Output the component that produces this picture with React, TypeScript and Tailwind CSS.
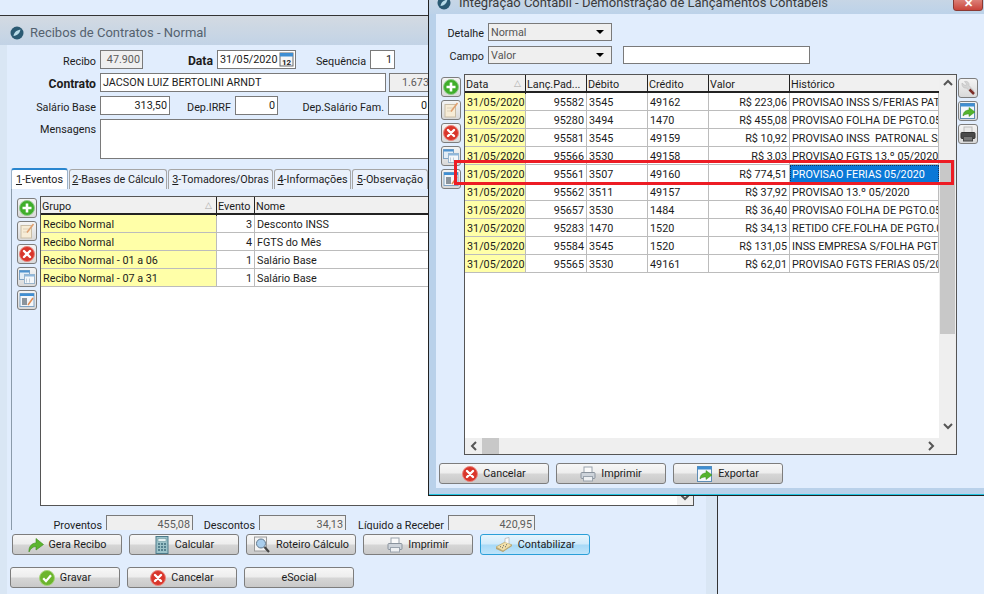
import type { ReactNode } from "react"

const IconAdd = () => (
  <svg width="16" height="16" viewBox="0 0 16 16">
    <circle cx="8" cy="8" r="7.5" fill="#3fae2a" stroke="#8fc98a" />
    <path d="M8 3.5v9M3.5 8h9" stroke="#fff" strokeWidth="2.6" />
  </svg>
)

const IconCancel = ({ size = 16 }: { size?: number }) => (
  <svg width={size} height={size} viewBox="0 0 16 16">
    <circle cx="8" cy="8" r="7.5" fill="#d9362b" stroke="#e9857d" />
    <path d="M5 5l6 6M11 5l-6 6" stroke="#fff" strokeWidth="2.4" strokeLinecap="round" />
  </svg>
)

const IconCheck = () => (
  <svg width="16" height="16" viewBox="0 0 16 16">
    <circle cx="8" cy="8" r="7.5" fill="#6cb52d" stroke="#a5d37a" />
    <path d="M4.2 8.2l2.8 3 5-6" stroke="#fff" strokeWidth="2.2" fill="none" />
  </svg>
)

const IconEdit = () => (
  <svg width="16" height="16" viewBox="0 0 16 16">
    <rect x="2" y="2.5" width="10.5" height="12.5" fill="#f7ecd6" stroke="#c9bda6" />
    <path d="M4 6h6M4 9h5" stroke="#ddd0b8" />
    <path d="M14.5 1L8 9.5" stroke="#e0a070" strokeWidth="1.6" />
  </svg>
)

const IconWindows = () => (
  <svg width="16" height="16" viewBox="0 0 16 16">
    <rect x="0.5" y="1.5" width="10" height="9" fill="#e3edf6" stroke="#7fa3c4" />
    <rect x="0.5" y="1.5" width="10" height="2" fill="#4f93cf" />
    <rect x="5.5" y="5.5" width="10" height="9" fill="#f4f7fa" stroke="#9ab4cb" />
    <rect x="5.5" y="5.5" width="10" height="2" fill="#8fb8dc" />
    <path d="M7.5 9.5v4M10.5 9.5v4" stroke="#c0cdd8" />
  </svg>
)

const IconWindowEdit = () => (
  <svg width="16" height="16" viewBox="0 0 16 16">
    <rect x="1" y="1.5" width="14" height="13" fill="#f3f6f9" stroke="#7fa3c4" />
    <rect x="1" y="1.5" width="14" height="2.5" fill="#3f8ed2" />
    <rect x="3" y="6" width="5" height="7" fill="#8b949c" />
    <path d="M14 6l-5 7" stroke="#e08a50" strokeWidth="1.5" />
  </svg>
)

const IconWrench = () => (
  <svg width="16" height="16" viewBox="0 0 16 16">
    <path d="M2 3l3 2.5 2-1L4.500 1.500C7 .8 9.500 2.500 9 5.500L14 11l-2 2.500-5.500-5.500C3.500 8.500 1.500 6 2 3z" fill="#d4d4d4" stroke="#b5b5b5" strokeWidth=".5" />
    <path d="M9.500 9.500l4.500 4.500" stroke="#7d2f28" strokeWidth="2.500" />
  </svg>
)

const IconExport = () => (
  <svg width="16" height="16" viewBox="0 0 16 16">
    <rect x="0.5" y="0.500" width="14" height="15" fill="#f3f7fb" stroke="#5f8db5" />
    <rect x="0.5" y="0.500" width="14" height="3" fill="#3f8ed2" />
    <path d="M3 13c0-4 3-6 6-6V4.500l6 4.500-6 4.500V11c-2.500 0-4.500.5-6 2z" fill="#52b32c" stroke="#3c8a1e" strokeWidth=".5" />
  </svg>
)

const IconPrinter = ({ dark = false }: { dark?: boolean }) => (
  <svg width="16" height="16" viewBox="0 0 16 16">
    <rect x="4" y="1" width="8" height="6" fill={dark ? "#e8e8e8" : "#fafafa"} stroke={dark ? "#bbb" : "#9aa3ad"} />
    <rect x="1" y="6.500" width="14" height="6" rx="1" fill={dark ? "#4a4a4a" : "#cdd3da"} stroke={dark ? "#333" : "#8a939d"} />
    <rect x="3.500" y="10.500" width="9" height="4.500" fill={dark ? "#777" : "#eef0f2"} stroke={dark ? "#444" : "#9aa3ad"} />
  </svg>
)

const IconArrow = () => (
  <svg width="16" height="16" viewBox="0 0 16 16">
    <path d="M1 15c-.5-5 2.500-9 7-9V1.500L15.500 7.500 8 13V9.500C5 9.500 2.500 11.500 1 15z" fill="#5cb52f" stroke="#3d8a1c" strokeWidth=".6" />
  </svg>
)

const IconCalculator = () => (
  <svg width="16" height="18" viewBox="0 0 16 18">
    <rect x="2" y="0.500" width="12" height="17" fill="#9cc3c9" stroke="#4c7a8a" />
    <rect x="4" y="2.500" width="8" height="3" fill="#e6f2f2" stroke="#5e8b96" strokeWidth=".5" />
    <path d="M4 8h2M7 8h2M10 8h2M4 11h2M7 11h2M10 11h2M4 14h2M7 14h2M10 14h2" stroke="#3f6d7c" strokeWidth="1.500" />
  </svg>
)

const IconSearchDoc = () => (
  <svg width="18" height="18" viewBox="0 0 18 18">
    <rect x="1.500" y="1" width="12" height="14" fill="#f3f3f3" stroke="#9a9a9a" />
    <circle cx="8" cy="7.500" r="4.500" fill="#a9cdec" stroke="#62788c" />
    <path d="M11.500 11l4.500 5" stroke="#444" strokeWidth="2.200" />
  </svg>
)

const IconAdding = () => (
  <svg width="18" height="16" viewBox="0 0 18 16">
    <path d="M1 10l9-5 7 3-9 6z" fill="#f1dfa8" stroke="#b49c5c" strokeWidth=".6" />
    <path d="M1 10v2l7 3 9-6V8l-9 6z" fill="#b8a470" />
    <path d="M10 5V1.500l4-1v6" fill="#fafafa" stroke="#aaa" strokeWidth=".6" />
    <path d="M5 10l1-.6M7 11l1-.6M8 9l1-.6M10 10l1-.6M11 8l1-.6" stroke="#6b6b6b" />
  </svg>
)

const IconCalendar = () => (
  <svg width="15" height="15" viewBox="0 0 15 15">
    <rect x="1" y="1" width="13" height="13" fill="#f6f6f6" stroke="#6b6b6b" />
    <rect x="1" y="1" width="13" height="3.500" fill="#3f8ed2" />
    <text x="7.500" y="12.500" textAnchor="middle" fontSize="8" fontWeight="700" fill="#222">12</text>
  </svg>
)

const IconLogo = () => (
  <svg width="14" height="14" viewBox="0 0 14 14">
    <circle cx="7" cy="7" r="6.500" fill="#2b5a73" />
    <path d="M3.500 10c.5-3.500 2.500-5.500 7-6.500-1 4-3 6-7 6.500z" fill="#b8dbe8" />
  </svg>
)

const Field = ({ w, h = 19, value = "", right, gray }: { w: number; h?: number; value?: string; right?: boolean; gray?: boolean }) => (
  <div
    style={{ width: w, height: h }}
    className={`shrink-0 border border-[#7a7a7a] px-[2px] leading-[18px] whitespace-nowrap overflow-hidden ${right ? "text-right" : ""} ${gray ? "bg-[#efefef] text-[#5c5c5c]" : "bg-white"}`}
  >
    {value}
  </div>
)

const Label = ({ w, bold, children }: { w: number; bold?: boolean; children: ReactNode }) => (
  <div style={{ width: w }} className={`shrink-0 text-right whitespace-nowrap h-[18px] leading-[21px] ${bold ? "font-bold text-[12.2px]" : ""}`}>
    {children}
  </div>
)

const Btn = ({ w = 110, icon, label, active }: { w?: number; icon?: ReactNode; label: string; active?: boolean }) => (
  <div
    style={{ width: w }}
    className={`shrink-0 h-[21px] flex items-center justify-center gap-[5px] rounded-[3px] border ${active ? "border-[#2a9fd8] bg-[linear-gradient(#e6f5fd,#cfeafb_48%,#a6d9f7_52%,#bfe4fa)]" : "border-[#7d7d7d] bg-[linear-gradient(#f7f7f7,#ededed_48%,#d6d6d6_52%,#c9c9c9)]"}`}
  >
    {icon}
    <span className="pt-[2px]">{label}</span>
  </div>
)

const ToolBtn = ({ children }: { children: ReactNode }) => (
  <div className="w-[20px] h-[20px] flex items-center justify-center rounded-[3px] border border-[#7d7d7d] bg-[linear-gradient(#f4f4f4,#d9d9d9)]">
    {children}
  </div>
)

const Chevron = ({ dir }: { dir: "up" | "down" | "left" | "right" }) => {
  const d = {
    up: "M1 6l4-4 4 4",
    down: "M1 3l4 4 4-4",
    left: "M7 1L3 5l4 4",
    right: "M3 1l4 4-4 4",
  }[dir]
  return (
    <svg width="10" height="10" viewBox="0 0 10 10">
      <path d={d} fill="none" stroke="#555" strokeWidth="2" />
    </svg>
  )
}

const Tab = ({ n, label, w, active }: { n: string; label: string; w: number; active?: boolean }) => (
  <div
    style={{ width: w }}
    className={`shrink-0 rounded-t-[3px] border border-b-0 text-center leading-[20px] whitespace-nowrap ${active ? "h-[21px] border-[#9db3c9] border-t-2 border-t-[#2a86cf] bg-white z-10" : "h-[20px] border-[#a6a6a6] bg-[#eaf1fb]"}`}
  >
    <span className="underline">{n}</span>-{label}
  </div>
)

const eventos = [
  ["Recibo Normal", "3", "Desconto INSS"],
  ["Recibo Normal", "4", "FGTS do Mês"],
  ["Recibo Normal - 01 a 06", "1", "Salário Base"],
  ["Recibo Normal - 07 a 31", "1", "Salário Base"],
]

const lancamentos = [
  ["95582", "3545", "49162", "R$ 223,06", "PROVISAO INSS S/FERIAS PATRONAL 05/2020"],
  ["95280", "3494", "1470", "R$ 455,08", "PROVISAO FOLHA DE PGTO.05/2020"],
  ["95581", "3545", "49159", "R$ 10,92", "PROVISAO INSS  PATRONAL S/FOLHA 05/2020"],
  ["95566", "3530", "49158", "R$ 3,03", "PROVISAO FGTS 13.º 05/2020"],
  ["95561", "3507", "49160", "R$ 774,51", "PROVISAO FERIAS 05/2020"],
  ["95562", "3511", "49157", "R$ 37,92", "PROVISAO 13.º 05/2020"],
  ["95657", "3530", "1484", "R$ 36,40", "PROVISAO FOLHA DE PGTO.05/2020"],
  ["95283", "1470", "1520", "R$ 34,13", "RETIDO CFE.FOLHA DE PGTO.05/2020"],
  ["95584", "3545", "1520", "R$ 131,05", "INSS EMPRESA S/FOLHA PGTO 05/2020"],
  ["95565", "3530", "49161", "R$ 62,01", "PROVISAO FGTS FERIAS 05/2020"],
]

const headCell = "border-r border-[#222] px-[1px] leading-[19px] whitespace-nowrap overflow-hidden"
const cell = "h-[18px] border-r border-b border-[#bcbcbc] px-[2px] leading-[20px] whitespace-pre overflow-hidden"

function MainWindow() {
  return (
    <div className="absolute left-0 top-[15px] w-[718px] h-[579px] border-t border-r border-[#333] bg-[#d9e6f4] flex flex-col">
      <div className="h-[29px] shrink-0 flex items-center gap-[6px] pl-[10px] pt-[4px] bg-[linear-gradient(#d3dae2,#c2d3e6)]">
        <IconLogo />
        <span className="text-[13px] text-[#55626f]">Recibos de Contratos - Normal</span>
      </div>
      <div className="ml-[7px] mr-[11px] flex-1 bg-[#e1edfd] flex flex-col">
        <div className="pt-[5px] flex flex-col gap-[4px]">
          <div className="flex items-center">
            <Label w={89}>Recibo</Label>
            <div className="w-[4px]" />
            <Field w={43} value="47.900" gray right />
            <Label w={70} bold>Data</Label>
            <div className="w-[4px]" />
            <div className="relative w-[79px] h-[19px] shrink-0 border border-[#7a7a7a] bg-white pl-[2px] leading-[18px]">
              31/05/2020
              <span className="absolute right-[1px] top-[1px]">
                <IconCalendar />
              </span>
            </div>
            <Label w={70}>Sequência</Label>
            <div className="w-[4px]" />
            <Field w={25} value="1" right />
          </div>
          <div className="flex items-center">
            <Label w={89} bold>Contrato</Label>
            <div className="w-[4px]" />
            <Field w={286} value="JACSON LUIZ BERTOLINI ARNDT" />
            <div className="w-[3px]" />
            <Field w={43} value="1.673" gray right />
          </div>
          <div className="flex items-center">
            <Label w={89}>Salário Base</Label>
            <div className="w-[4px]" />
            <Field w={70} value="313,50" right />
            <Label w={61}>Dep.IRRF</Label>
            <div className="w-[4px]" />
            <Field w={43} value="0" right />
            <Label w={106}>Dep.Salário Fam.</Label>
            <div className="w-[4px]" />
            <Field w={42} value="0" right />
          </div>
          <div className="flex">
            <Label w={89}>Mensagens</Label>
            <div className="w-[4px]" />
            <Field w={500} h={40} />
          </div>
        </div>

        <div className="ml-[4px] mt-[9px] flex items-end gap-[1px] -mb-[1px]">
          <Tab n="1" label="Eventos" w={57} active />
          <Tab n="2" label="Bases de Cálculo" w={98} />
          <Tab n="3" label="Tomadores/Obras" w={105} />
          <Tab n="4" label="Informações" w={77} />
          <Tab n="5" label="Observação" w={76} />
        </div>

        <div className="ml-[4px] w-[691px] h-[342px] shrink-0 overflow-hidden border-l border-[#8a9aaa] pt-[8px]">
          <div className="flex gap-[2px] pl-[5px]">
            <div className="w-[21px] pt-[2px] flex flex-col gap-[3px]">
              <ToolBtn><IconAdd /></ToolBtn>
              <ToolBtn><IconEdit /></ToolBtn>
              <ToolBtn><IconCancel /></ToolBtn>
              <ToolBtn><IconWindows /></ToolBtn>
              <ToolBtn><IconWindowEdit /></ToolBtn>
            </div>
            <div className="w-[654px] h-[310px] border border-[#555] bg-white flex">
              <div className="flex-1">
                <div className="grid grid-cols-[176px_38px_1fr] h-[18px] bg-[#f0f0f0] border-b-2 border-[#222]">
                  <div className={`${headCell} relative`}>
                    Grupo
                    <span className="absolute right-[4px] top-[1px] text-[9px] leading-[14px] text-[#aaa]">△</span>
                  </div>
                  <div className={headCell}>Evento</div>
                  <div className="px-[1px] leading-[19px]">Nome</div>
                </div>
                {eventos.map((row, i) => (
                  <div key={i} className="grid grid-cols-[176px_38px_1fr]">
                    <div className={`${cell} bg-[#ffffa8]`}>{row[0]}</div>
                    <div className={`${cell} text-right`}>{row[1]}</div>
                    <div className={cell}>{row[2]}</div>
                  </div>
                ))}
              </div>
              <div className="w-[16px] bg-[#efefef] flex flex-col justify-end items-center pb-[3px]">
                <Chevron dir="down" />
              </div>
            </div>
          </div>
          <div className="mt-[9px] flex items-start">
            <Label w={90}>Proventos</Label>
            <div className="w-[4px]" />
            <Field w={87} value="455,08" gray right />
            <Label w={62}>Descontos</Label>
            <div className="w-[4px]" />
            <Field w={87} value="34,13" gray right />
            <Label w={98}>Líquido a Receber</Label>
            <div className="w-[4px]" />
            <Field w={87} value="420,95" gray right />
          </div>
        </div>

        <div className="mt-[4px] pl-[5px] flex gap-[7px]">
          <Btn icon={<IconArrow />} label="Gera Recibo" />
          <Btn icon={<IconCalculator />} label="Calcular" />
          <Btn icon={<IconSearchDoc />} label="Roteiro Cálculo" />
          <Btn icon={<IconPrinter />} label="Imprimir" />
          <Btn icon={<IconAdding />} label="Contabilizar" active />
        </div>
        <div className="mt-[12px] pl-[3px] flex gap-[7px]">
          <Btn icon={<IconCheck />} label="Gravar" />
          <Btn icon={<IconCancel />} label="Cancelar" />
          <Btn label="eSocial" />
        </div>
      </div>
    </div>
  )
}

const Select = ({ value }: { value: string }) => (
  <div className="relative w-[124px] h-[18px] shrink-0 border border-[#7a7a7a] bg-[#efefef] pl-[2px] leading-[18px] text-[#555]">
    {value}
    <span className="absolute right-[7px] top-[6px] w-0 h-0 border-x-[4px] border-t-[4px] border-x-transparent border-t-black" />
  </div>
)

function Dialog() {
  return (
    <div className="absolute left-[428px] top-[-16px] w-[570px] h-[512px] border-l border-b border-[#222] bg-[#b9d1ea] flex flex-col shadow-[inset_0_-1px_0_#22c4e0]">
      <div className="relative h-[30px] shrink-0 flex items-end gap-[8px] pl-[8px] pb-[4px] bg-[linear-gradient(#d3dae2,#bcd2e9)]">
        <IconLogo />
        <span className="text-[13px] leading-[14px] text-[#3a3a3a]">Integração Contábil - Demonstração de Lançamentos Contábeis</span>
        <div className="absolute left-[524px] bottom-[3px] w-[30px] h-[18px] rounded-b-[3px] border border-[#8a3a34] bg-[linear-gradient(#e8a49c,#c9443a)] flex items-end justify-center text-white font-bold leading-[12px]">
          ✕
        </div>
      </div>
      <div className="ml-[7px] h-[474px] shrink-0 bg-[#e1edfd] pt-[9px]">
        <div className="flex items-center h-[18px]">
          <Label w={48}>Detalhe</Label>
          <div className="w-[4px]" />
          <Select value="Normal" />
        </div>
        <div className="mt-[5px] flex items-center h-[18px]">
          <Label w={48}>Campo</Label>
          <div className="w-[4px]" />
          <Select value="Valor" />
          <div className="w-[11px]" />
          <Field w={187} h={18} />
        </div>

        <div className="mt-[10px] flex">
          <div className="ml-[5px] w-[20px] pt-[3px] flex flex-col gap-[3px]">
            <ToolBtn><IconAdd /></ToolBtn>
            <ToolBtn><IconEdit /></ToolBtn>
            <ToolBtn><IconCancel /></ToolBtn>
            <ToolBtn><IconWindows /></ToolBtn>
            <ToolBtn><IconWindowEdit /></ToolBtn>
          </div>
          <div className="ml-[3px] w-[493px] h-[381px] border border-[#555] bg-white flex">
            <div className="flex-1 flex flex-col">
              <div className="flex-1">
                <div className="grid grid-cols-[61px_61px_61px_61px_81px_1fr] h-[18px] bg-[#f0f0f0] border-b-2 border-[#222]">
                  <div className={`${headCell} relative`}>
                    Data
                    <span className="absolute right-[4px] top-[1px] text-[9px] leading-[14px] text-[#aaa]">△</span>
                  </div>
                  <div className={headCell}>Lanç.Pad...</div>
                  <div className={headCell}>Débito</div>
                  <div className={headCell}>Crédito</div>
                  <div className={headCell}>Valor</div>
                  <div className="px-[1px] leading-[19px]">Histórico</div>
                </div>
                {lancamentos.map((row, i) => (
                  <div key={i} className="grid grid-cols-[61px_61px_61px_61px_81px_1fr]">
                    <div className={`${cell} bg-[#ffffa8]`}>31/05/2020</div>
                    <div className={`${cell} text-right`}>{row[0]}</div>
                    <div className={cell}>{row[1]}</div>
                    <div className={cell}>{row[2]}</div>
                    <div className={`${cell} text-right`}>{row[3]}</div>
                    {i === 4 ? (
                      <div className="h-[18px] px-[1px] leading-[18px] whitespace-pre overflow-hidden bg-[#0a78d7] text-white border border-dotted border-[#10335c]">{row[4]}</div>
                    ) : (
                      <div className={cell}>{row[4]}</div>
                    )}
                  </div>
                ))}
              </div>
              <div className="h-[16px] shrink-0 bg-[#efefef] flex items-center">
                <div className="w-[17px] flex justify-center"><Chevron dir="left" /></div>
                <div className="w-[17px] h-[16px] bg-[#c8c8c8]" />
                <div className="flex-1" />
                <div className="w-[17px] flex justify-center"><Chevron dir="right" /></div>
              </div>
            </div>
            <div className="w-[17px] shrink-0 bg-[#efefef] flex flex-col items-center">
              <div className="mt-[4px] h-[10px]"><Chevron dir="up" /></div>
              <div className="mt-[71px] w-[15px] h-[174px] bg-[#c8c8c8]" />
              <div className="mt-[87px]"><Chevron dir="down" /></div>
            </div>
          </div>
          <div className="ml-[1px] w-[20px] pt-[4px] flex flex-col gap-[3px]">
            <ToolBtn><IconWrench /></ToolBtn>
            <ToolBtn><IconExport /></ToolBtn>
            <ToolBtn><IconPrinter dark /></ToolBtn>
          </div>
        </div>

        <div className="mt-[8px] pl-[3px] flex gap-[7px]">
          <Btn icon={<IconCancel />} label="Cancelar" />
          <Btn icon={<IconPrinter />} label="Imprimir" />
          <Btn icon={<IconExport />} label="Exportar" />
        </div>
      </div>
    </div>
  )
}

export default function App() {
  return (
    <div className="relative w-[984px] h-[594px] overflow-hidden bg-[#e1edfd] font-['Roboto',sans-serif] text-[10.8px] text-[#1c1c1c]">
      <MainWindow />
      <Dialog />
      {/* marcação vermelha sobre a linha selecionada */}
      <div className="absolute left-[454px] top-[160px] w-[500px] h-[25px] border-[3px] border-[#ed1c24]" />
    </div>
  )
}
